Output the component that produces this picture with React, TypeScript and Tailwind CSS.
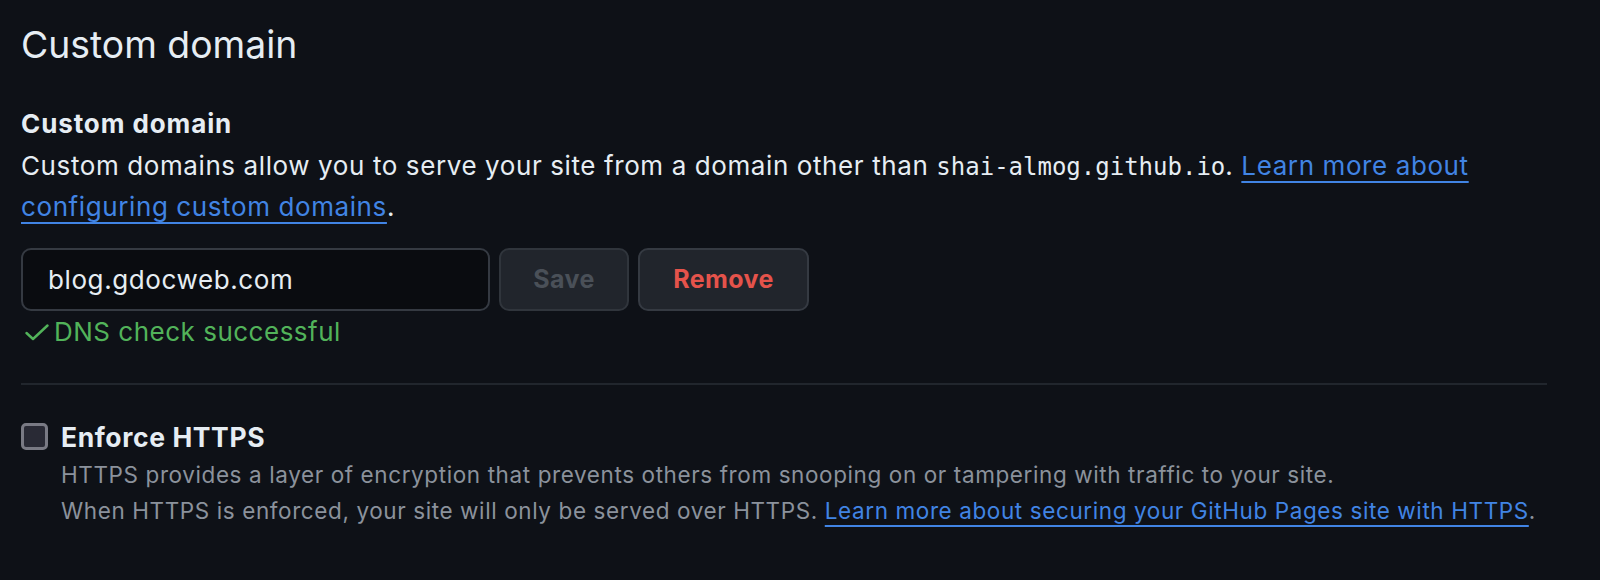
import React from "react";

function CheckIcon() {
  return (
    <svg width="24" height="17" viewBox="0 0 24 17" fill="none" className="shrink-0">
      <path d="M1.5 9 L8 15 L22.5 1.5" stroke="#52b35a" strokeWidth="2.4" strokeLinecap="round" strokeLinejoin="round" />
    </svg>
  );
}

export default function App() {
  return (
    <div
      className="min-h-[580px] w-full bg-[#0e1117] text-[#e6edf3]"
      style={{ fontFamily: "Inter, 'Liberation Sans', sans-serif" }}
    >
      <div className="ml-[21px] w-[1526px] pt-[21px]">
        <h2 className="text-[37.3px] leading-[48px] font-normal">Custom domain</h2>

        <h3 className="mt-[35px] text-[26px] leading-[40px] font-bold tracking-[0.9px]">Custom domain</h3>
        <p className="mt-[2px] text-[26px] leading-[40px] tracking-[0.6px]">
          Custom domains allow you to serve your site from a domain other than{" "}
          <code className="text-[24px] tracking-normal" style={{ fontFamily: "'DejaVu Sans Mono', 'Liberation Mono', monospace" }}>
            shai-almog.github.io
          </code>
          .{" "}
          <a className="text-[#4184e4] underline decoration-2 underline-offset-[6px]" href="#">
            Learn more about
            <br />
            configuring custom domains
          </a>
          .
        </p>

        <div className="mt-[21px] flex gap-[9px]">
          <div className="flex h-[63px] w-[469px] items-center rounded-[10px] border-2 border-[#353a42] bg-[#0a0c10] px-[25px] text-[26px] tracking-[0.6px] text-[#e6edf3]">
            blog.gdocweb.com
          </div>
          <button className="h-[63px] w-[130px] rounded-[10px] border-2 border-[#30353c] bg-[#21252c] text-[25px] font-bold tracking-[0.4px] text-[#4a5058]">
            Save
          </button>
          <button className="h-[63px] w-[171px] rounded-[10px] border-2 border-[#353a42] bg-[#21252c] text-[25px] font-bold tracking-[0.4px] text-[#e5534b]">
            Remove
          </button>
        </div>

        <div className="mt-[3px] flex items-center gap-[5px] pl-[4px] text-[26px] leading-[36px] tracking-[0.5px] text-[#52b35a]">
          <CheckIcon />
          <span>DNS check successful</span>
        </div>

        <div className="mt-[33px] h-[2px] w-full bg-[#21262d]" />

        <div className="mt-[34px] flex gap-[13px]">
          <div className="mt-[4px] h-[27px] w-[27px] shrink-0 rounded-[5px] border-[3px] border-[#797a84] bg-[#292a35]" />
          <div>
            <div className="text-[26.5px] leading-[36px] font-bold tracking-[0.6px]">Enforce HTTPS</div>
            <div className="mt-[2px] text-[22.5px] leading-[35.5px] tracking-[0.6px] text-[#8b929c]">
              HTTPS provides a layer of encryption that prevents others from snooping on or tampering with traffic to your site.
              <br />
              When HTTPS is enforced, your site will only be served over HTTPS.{" "}
              <a className="text-[#4184e4] underline decoration-2 underline-offset-[6px]" href="#">
                Learn more about securing your GitHub Pages site with HTTPS
              </a>
              .
            </div>
          </div>
        </div>
      </div>
    </div>
  );
}
